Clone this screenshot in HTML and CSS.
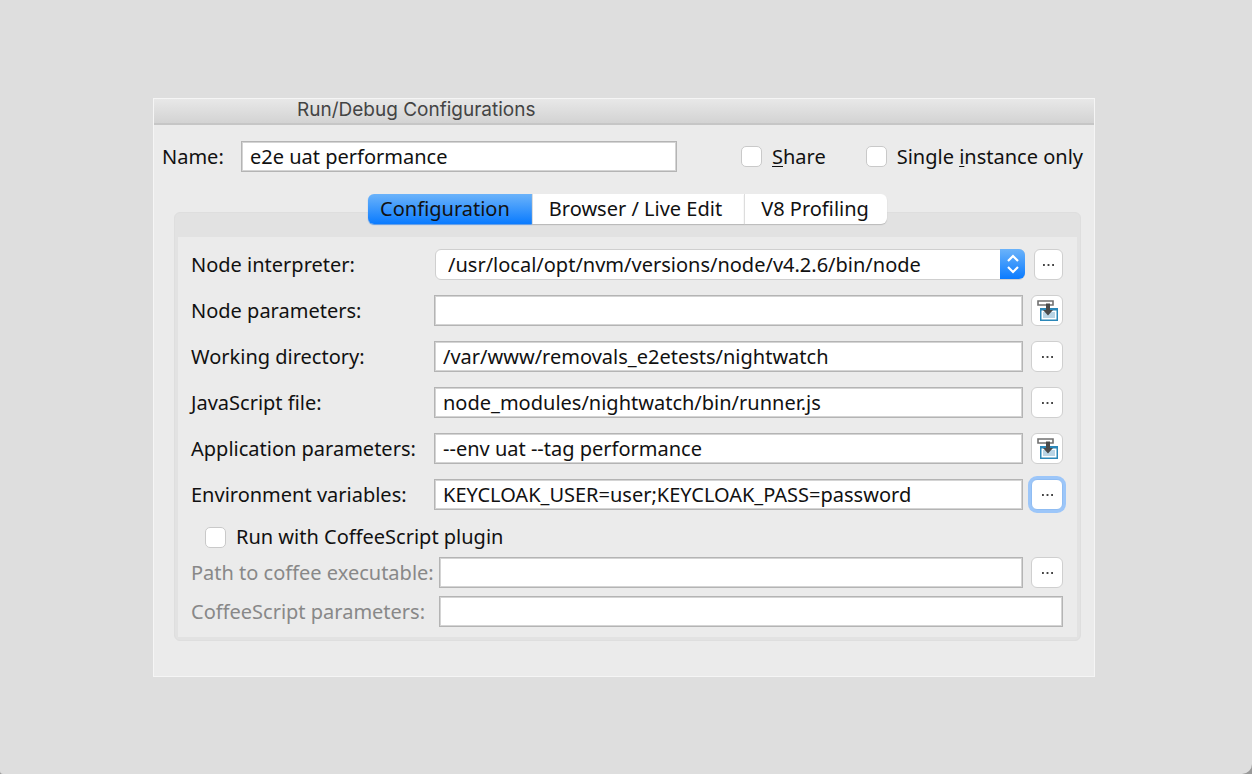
FILE: index.html
```html
<!DOCTYPE html>
<html lang="en">
<head>
<meta charset="utf-8">
<title>Run/Debug Configurations</title>
<link rel="stylesheet" href="styles.css">
</head>
<body>
<svg class="symbols" aria-hidden="true">
  <symbol id="icon-dots" viewBox="0 0 12 2"><path d="M0 0h2v2H0zM5 0h2v2H5zM10 0h2v2h-2z" fill="#444"/></symbol>
  <symbol id="icon-insert" viewBox="0 0 21 21">
    <path d="M1 1h15v4H1z" fill="#fff" stroke="#707070" stroke-width="1.6"/>
    <path d="M3 8h18v13H3z" fill="#2b87b8"/>
    <path d="M4.500 10.500h15v9h-15z" fill="#fff"/>
    <path d="M6 12h12v6H6z" fill="#b9d4e5"/>
    <path d="M9 3.500h4V10h3l-5 5.500L6 10h3z" fill="#4a4a4a"/>
  </symbol>
</svg>
<main class="window">
  <header class="titlebar"><h1 class="title">Run/Debug Configurations</h1></header>
  <form class="content">
    <div class="name-row">
      <label class="name-label" for="name">Name:</label>
      <input class="field name-field" id="name" type="text" value="e2e uat performance">
      <div class="options">
        <label class="check"><input class="checkbox" type="checkbox"><span><u>S</u>hare</span></label>
        <label class="check"><input class="checkbox" type="checkbox"><span>Single <u>i</u>nstance only</span></label>
      </div>
    </div>
    <div class="tabs" role="tablist">
      <button class="tab tab-active" type="button" role="tab" aria-selected="true">Configuration</button>
      <button class="tab" type="button" role="tab" aria-selected="false">Browser / Live Edit</button>
      <button class="tab" type="button" role="tab" aria-selected="false">V8 Profiling</button>
    </div>
    <section class="panel">
      <div class="panel-body">
        <div class="row row-combo">
          <label class="label" for="node">Node interpreter:</label>
          <div class="combo">
            <select class="select" id="node"><option>/usr/local/opt/nvm/versions/node/v4.2.6/bin/node</option></select>
            <span class="stepper"><svg width="14" height="20" viewBox="0 0 14 20"><path d="M2 7l5-5 5 5M2 13l5 5 5-5" fill="none" stroke="#fff" stroke-width="2.200"/></svg></span>
          </div>
          <button class="square" type="button" aria-label="Browse"><svg class="dots"><use href="#icon-dots"/></svg></button>
        </div>
        <div class="row">
          <label class="label" for="params">Node parameters:</label>
          <input class="field" id="params" type="text">
          <button class="square" type="button" aria-label="Expand"><svg class="insert"><use href="#icon-insert"/></svg></button>
        </div>
        <div class="row">
          <label class="label" for="dir">Working directory:</label>
          <input class="field" id="dir" type="text" value="/var/www/removals_e2etests/nightwatch">
          <button class="square" type="button" aria-label="Browse"><svg class="dots"><use href="#icon-dots"/></svg></button>
        </div>
        <div class="row">
          <label class="label" for="file">JavaScript file:</label>
          <input class="field" id="file" type="text" value="node_modules/nightwatch/bin/runner.js">
          <button class="square" type="button" aria-label="Browse"><svg class="dots"><use href="#icon-dots"/></svg></button>
        </div>
        <div class="row">
          <label class="label" for="app">Application parameters:</label>
          <input class="field" id="app" type="text" value="--env uat --tag performance">
          <button class="square" type="button" aria-label="Expand"><svg class="insert"><use href="#icon-insert"/></svg></button>
        </div>
        <div class="row">
          <label class="label" for="env">Environment variables:</label>
          <input class="field" id="env" type="text" value="KEYCLOAK_USER=user;KEYCLOAK_PASS=password">
          <button class="square square-focus" type="button" aria-label="Edit variables"><svg class="dots"><use href="#icon-dots"/></svg></button>
        </div>
        <div class="coffee">
          <label class="check coffee-check"><input class="checkbox" type="checkbox"><span>Run with CoffeeScript plugin</span></label>
          <div class="row row-coffee">
            <label class="label" for="path">Path to coffee executable:</label>
            <input class="field" id="path" type="text" disabled>
            <button class="square" type="button" aria-label="Browse"><svg class="dots"><use href="#icon-dots"/></svg></button>
          </div>
          <div class="row row-coffee">
            <label class="label" for="cparams">CoffeeScript parameters:</label>
            <input class="field" id="cparams" type="text" disabled>
          </div>
        </div>
      </div>
    </section>
  </form>
</main>
</body>
</html>
```
FILE: styles.css
```css
* { box-sizing: border-box; }
html { min-height: 100%; background: #999; display: flex; }
body {
  flex: 1;
  margin: 0;
  padding: 98px 157px 97px 153px;
  background: #dedede;
  border-radius: 0 0 10px 3px;
  color: #111;
  font: 20px/24px "Noto Sans", "Open Sans", sans-serif;
}
input, select, button { font: inherit; color: inherit; margin: 0; }
.symbols { display: none; }
.window {
  background: #ebebeb;
  border: 1px solid #f5f5f5;
}
.titlebar {
  height: 26px;
  background: linear-gradient(#e8e8e8, #d3d3d3);
  border-bottom: 2px solid #c6c6c6;
  padding-left: 143px;
}
.title {
  margin: 0;
  font: 19px/21px Inter, sans-serif;
  color: #444;
}
.content { padding: 16px 13px 35px 20px; }
.name-row {
  display: flex;
  align-items: center;
  margin: 0 -2px 22px -12px;
}
.name-label { width: 79px; }
.field {
  flex: 1;
  min-width: 0;
  height: 31px;
  padding: 0 8px;
  background: #fff;
  border: 1px solid #b4b4b4;
  box-shadow: inset 0 0 0 1px #d4d4d4;
  border-radius: 0;
}
.options { display: flex; gap: 40px; margin-left: 64px; }
.check { display: flex; align-items: center; gap: 10px; white-space: nowrap; }
.checkbox {
  appearance: none;
  width: 21px;
  height: 21px;
  background: #fff;
  border: 1px solid #c9c9c9;
  border-radius: 5px;
}
u { text-underline-offset: 2px; text-decoration-thickness: 1px; }
.tabs { display: flex; justify-content: center; position: relative; z-index: 1; }
.tab {
  height: 30px;
  padding: 0 22px 0 16px;
  background: #fff;
  border: 0;
  border-left: 1px solid #ddd;
  box-shadow: 0 1px 1px #bbb;
  white-space: nowrap;
}
.tab:last-child { border-radius: 0 6px 6px 0; padding-right: 18px; }
.tab-active {
  padding-left: 12px;
  border-left: 0;
  border-radius: 6px 0 0 6px;
  background: linear-gradient(#6bb3fa, #0a7bff);
  box-shadow: 0 1px 1px #5a9ae8;
}
.panel {
  margin-top: -12px;
  padding: 24px 3px 3px;
  background: #e2e2e2;
  border: 1px solid #dedede;
  border-radius: 6px;
}
.panel-body {
  display: flex;
  flex-direction: column;
  gap: 15px;
  padding: 12px 14px 10px 13px;
  background: #ebebeb;
}
.row { display: flex; align-items: center; gap: 8px; }
.label { width: 235px; white-space: nowrap; }
.combo { flex: 1; position: relative; min-width: 0; }
.row-combo { gap: 9px; }
.select {
  display: block;
  appearance: none;
  width: 100%;
  height: 31px;
  padding: 0 28px 0 12px;
  background: #fff;
  border: 1px solid #cfcfcf;
  border-radius: 6px;
}
.stepper {
  position: absolute;
  top: 0;
  right: 0;
  width: 25px;
  height: 30px;
  display: grid;
  place-items: center;
  border-radius: 0 6px 6px 0;
  background: linear-gradient(#6bb3fa, #0a7bff);
  pointer-events: none;
}
.square {
  display: grid;
  place-items: center;
  width: 32px;
  height: 31px;
  padding: 0;
  background: #fff;
  border: 1px solid #cfcfcf;
  border-radius: 6px;
}
.row-combo .square { width: 29px; }
.square-focus {
  border-color: #8fbcf2;
  box-shadow: 0 0 0 3px #9cc6f9;
}
.dots { width: 11px; height: 2px; }
.insert { width: 21px; height: 21px; }
.coffee { display: flex; flex-direction: column; gap: 8px; }
.coffee-check { padding-left: 14px; }
.row-coffee .label { width: 240px; color: #888; }
```
